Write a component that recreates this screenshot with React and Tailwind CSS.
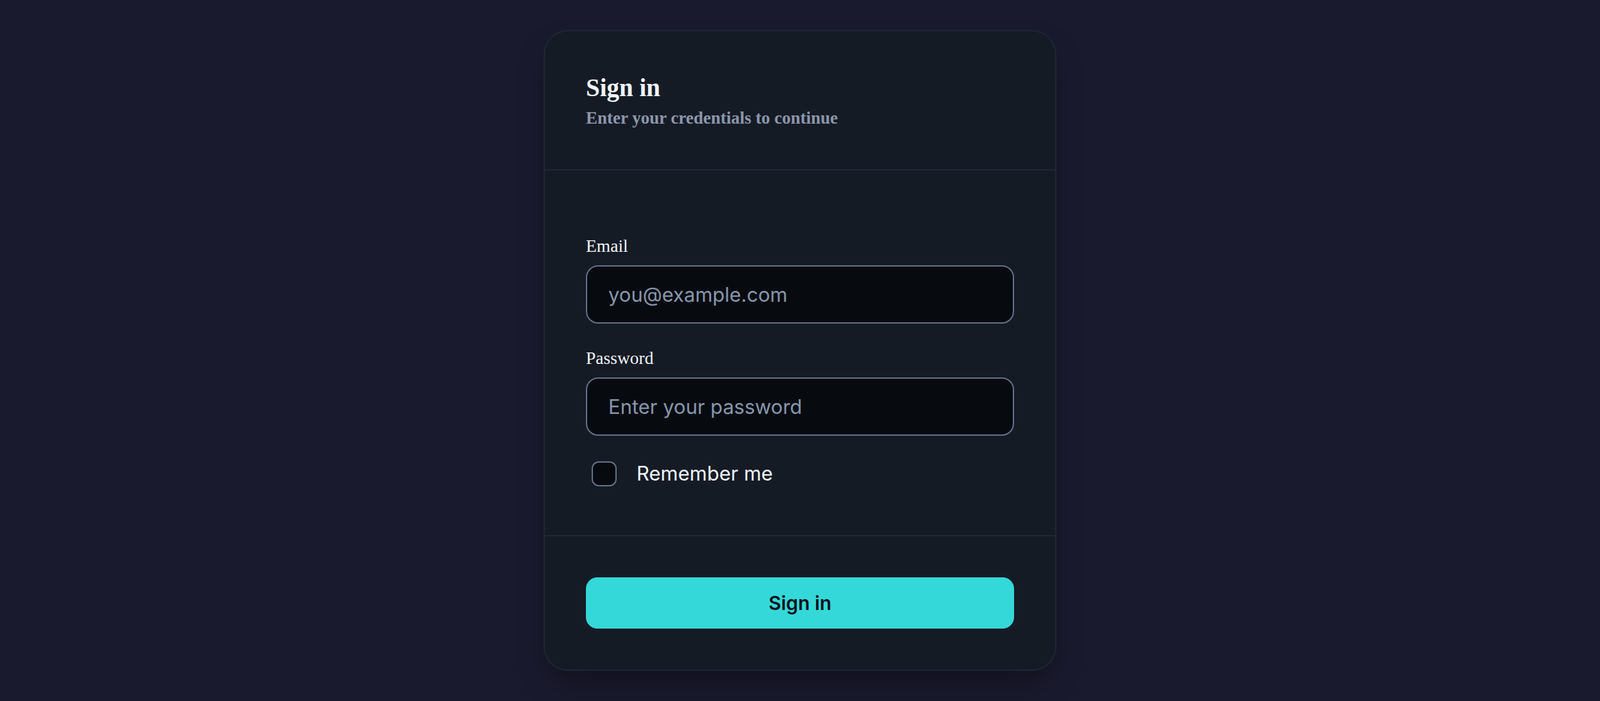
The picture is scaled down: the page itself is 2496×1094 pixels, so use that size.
import React, { useState } from 'react';

const serif = { fontFamily: '"Liberation Serif", "Times New Roman", serif' };

const Field = ({ label, type, placeholder, className = '' }) => (
  <div className={className}>
    <label
      className="block text-[27.5px] leading-[41px] text-[#f1f5f9] font-['Liberation_Serif',serif]"
    >
      {label}
    </label>
    <input
      type={type}
      placeholder={placeholder}
      className="mt-[10px] block w-full h-[91px] rounded-[19px] border-2 border-[#62738c] bg-[#070b10] px-[33px] text-[31px] text-[#f1f5f9] placeholder:text-[#8796ab] outline-none font-['Inter',sans-serif]"
    />
  </div>
);

const App = () => {
  const [remember, setRemember] = useState(false);

  return (
    <div className="min-h-screen w-full flex items-center justify-center bg-[#1a1a2e]">
      <div className="w-[800px] rounded-[38px] border-2 border-[#1d2737] bg-[#151b25] shadow-2xl shadow-black/40">
        {/* Header */}
        <div className="px-[64px] pt-[66px] pb-[62px] border-b-2 border-[#1e2939]" style={serif}>
          <h1 className="text-[39px] leading-[43px] font-bold text-[#f1f5f9]">Sign in</h1>
          <p className="mt-[8px] text-[27px] leading-[36px] font-bold text-[#8b97ab]">
            Enter your credentials to continue
          </p>
        </div>

        {/* Body */}
        <div className="px-[64px] pt-[97px] pb-[72px] border-b-2 border-[#1e2939]">
          <Field label="Email" type="email" placeholder="you@example.com" />
          <Field label="Password" type="password" placeholder="Enter your password" className="mt-[33px]" />

          <label className="mt-[35px] flex h-[48px] items-center cursor-pointer font-['Inter',sans-serif]">
            <input
              type="checkbox"
              checked={remember}
              onChange={(e) => setRemember(e.target.checked)}
              className="ml-[9px] h-[39px] w-[39px] appearance-none rounded-[11px] border-2 border-[#62738c] bg-[#070b10] checked:bg-[#35d8d9]"
            />
            <span className="ml-[31px] text-[31px] text-[#f1f5f9]">Remember me</span>
          </label>
        </div>

        {/* Footer */}
        <div className="px-[64px] py-[64px]">
          <button className="w-full h-[80px] rounded-[18px] bg-[#35d8d9] text-[30px] font-semibold text-[#0b1219] font-['Inter',sans-serif]">
            Sign in
          </button>
        </div>
      </div>
    </div>
  );
};

export default App;
